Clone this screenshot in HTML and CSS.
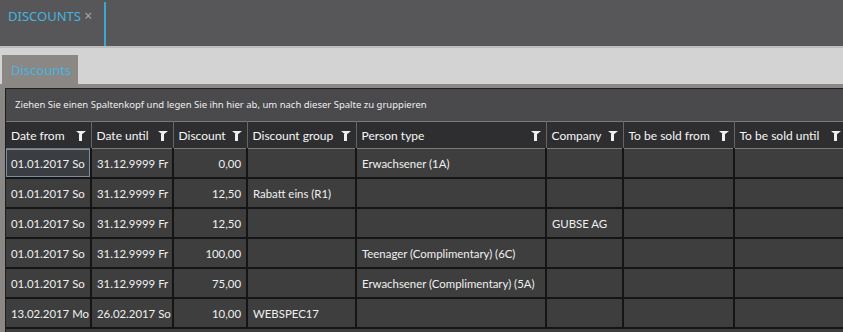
FILE: index.html
```html
<!DOCTYPE html>
<html>
<head>
    <title>Discounts</title>
    <link rel="stylesheet" href="styles.css">
</head>
<body>
    <div class="doc-bar"> <!-- document tabs -->
        <div class="doc-tab">DISCOUNTS <span class="doc-close">&times;</span></div>
    </div>
    <div class="tab-strip">
        <div class="tab active">Discounts</div>
    </div>
    <div class="tab-body">
        <div class="grid">
            <div class="group-panel">Ziehen Sie einen Spaltenkopf und legen Sie ihn hier ab, um nach dieser Spalte zu gruppieren</div>
            <table class="grid-table">
                <colgroup>
                    <col style="width: 85px">
                    <col style="width: 82px">
                    <col style="width: 74px">
                    <col style="width: 109px">
                    <col style="width: 190px">
                    <col style="width: 77px">
                    <col style="width: 111px">
                    <col style="width: 112px">
                </colgroup>
                <thead>
                    <tr>
                        <th>Date from <span class="filter"></span></th>
                        <th>Date until <span class="filter"></span></th>
                        <th>Discount <span class="filter"></span></th>
                        <th>Discount group <span class="filter"></span></th>
                        <th>Person type <span class="filter"></span></th>
                        <th>Company <span class="filter"></span></th>
                        <th>To be sold from <span class="filter"></span></th>
                        <th>To be sold until <span class="filter"></span></th>
                    </tr>
                </thead>
                <tbody>
                    <tr>
                        <td class="current">01.01.2017 So</td>
                        <td>31.12.9999 Fr</td>
                        <td class="num">0,00</td>
                        <td></td>
                        <td>Erwachsener (1A)</td>
                        <td></td>
                        <td></td>
                        <td></td>
                    </tr>
                    <tr>
                        <td>01.01.2017 So</td>
                        <td>31.12.9999 Fr</td>
                        <td class="num">12,50</td>
                        <td>Rabatt eins (R1)</td>
                        <td></td>
                        <td></td>
                        <td></td>
                        <td></td>
                    </tr>
                    <tr>
                        <td>01.01.2017 So</td>
                        <td>31.12.9999 Fr</td>
                        <td class="num">12,50</td>
                        <td></td>
                        <td></td>
                        <td>GUBSE AG</td>
                        <td></td>
                        <td></td>
                    </tr>
                    <tr>
                        <td>01.01.2017 So</td>
                        <td>31.12.9999 Fr</td>
                        <td class="num">100,00</td>
                        <td></td>
                        <td>Teenager (Complimentary) (6C)</td>
                        <td></td>
                        <td></td>
                        <td></td>
                    </tr>
                    <tr>
                        <td>01.01.2017 So</td>
                        <td>31.12.9999 Fr</td>
                        <td class="num">75,00</td>
                        <td></td>
                        <td>Erwachsener (Complimentary) (5A)</td>
                        <td></td>
                        <td></td>
                        <td></td>
                    </tr>
                    <tr>
                        <td>13.02.2017 Mo</td>
                        <td>26.02.2017 So</td>
                        <td class="num">10,00</td>
                        <td>WEBSPEC17</td>
                        <td></td>
                        <td></td>
                        <td></td>
                        <td></td>
                    </tr>
                </tbody>
            </table>
        </div>
    </div>
</body>
</html>
```

FILE: styles.css
```css
body {
    margin: 0;
    height: 332px;
    overflow: hidden;
    background-color: #8b8785;
    font-family: "Noto Sans", "Segoe UI", sans-serif;
    display: flex;
    flex-direction: column;
}

.doc-bar {
    height: 46px;
    background-color: #575759;
    border-bottom: 2px solid #bdbdbd;
    display: flex;
    flex-shrink: 0;
}

.doc-tab {
    margin-top: 2px;
    padding: 4px 12px 0 8px;
    border-right: 2px solid #3aa7d4;
    color: #43b4e0;
    font-size: 13px;
}

.doc-close {
    color: #a6a6a6;
    font-size: 14px;
}

.tab-strip {
    height: 29px;
    padding: 7px 0 0 2px;
    background-color: #d3d3d3;
    display: flex;
    flex-shrink: 0;
}

.tab {
    width: 76px;
    box-sizing: border-box;
    padding: 6px 0 0 9px;
    font-size: 13px;
    color: #47b5e0;
}

.tab.active {
    background-color: #8b8785;
}

.tab-body {
    flex: 1;
    padding: 4px 0 0 5px;
    min-height: 0;
}

.grid {
    height: 100%;
    background-color: #3e3e3e;
    border-top: 1px solid #1f1f1f;
    border-left: 1px solid #1f1f1f;
    overflow: hidden;
}

.group-panel {
    height: 32px;
    box-sizing: border-box;
    padding: 9px 0 0 9px;
    background-color: #4a4a4d;
    color: #eeeeee;
    font-size: 9.5px;
}

.grid-table {
    border-collapse: collapse;
    table-layout: fixed;
    width: 841px;
    font-family: "Lato", "Segoe UI", sans-serif;
    font-size: 11.4px;
}

.grid-table th {
    height: 26px;
    padding: 0 5px;
    background-color: #2e2e30;
    border-top: 1px solid #7a7a7a;
    border-bottom: 1px solid #7a7a7a;
    border-right: 1px solid #666;
    color: #f6f6f6;
    font-size: 12px;
    font-weight: normal;
    text-align: left;
    white-space: nowrap;
    position: relative;
}

.filter {
    position: absolute;
    right: 5px;
    top: 9px;
    width: 0;
    height: 0;
    border-left: 5px solid transparent;
    border-right: 5px solid transparent;
    border-top: 4px solid #f0f0f0;
}

.filter::after {
    content: "";
    position: absolute;
    left: -1.5px;
    top: -1px;
    width: 3px;
    height: 7px;
    background-color: #f0f0f0;
}

.grid-table td {
    height: 28px;
    padding: 0 5px;
    background-color: #3e3e3e;
    border-right: 2px solid #151515;
    border-bottom: 2px solid #151515;
    color: #f0f0f0;
    white-space: nowrap;
    overflow: hidden;
}

.grid-table td.num {
    text-align: right;
}

.grid-table td.current {
    box-shadow: inset 0 0 0 1px #7f8e9e;
    background-color: #3a3d41;
}
```
